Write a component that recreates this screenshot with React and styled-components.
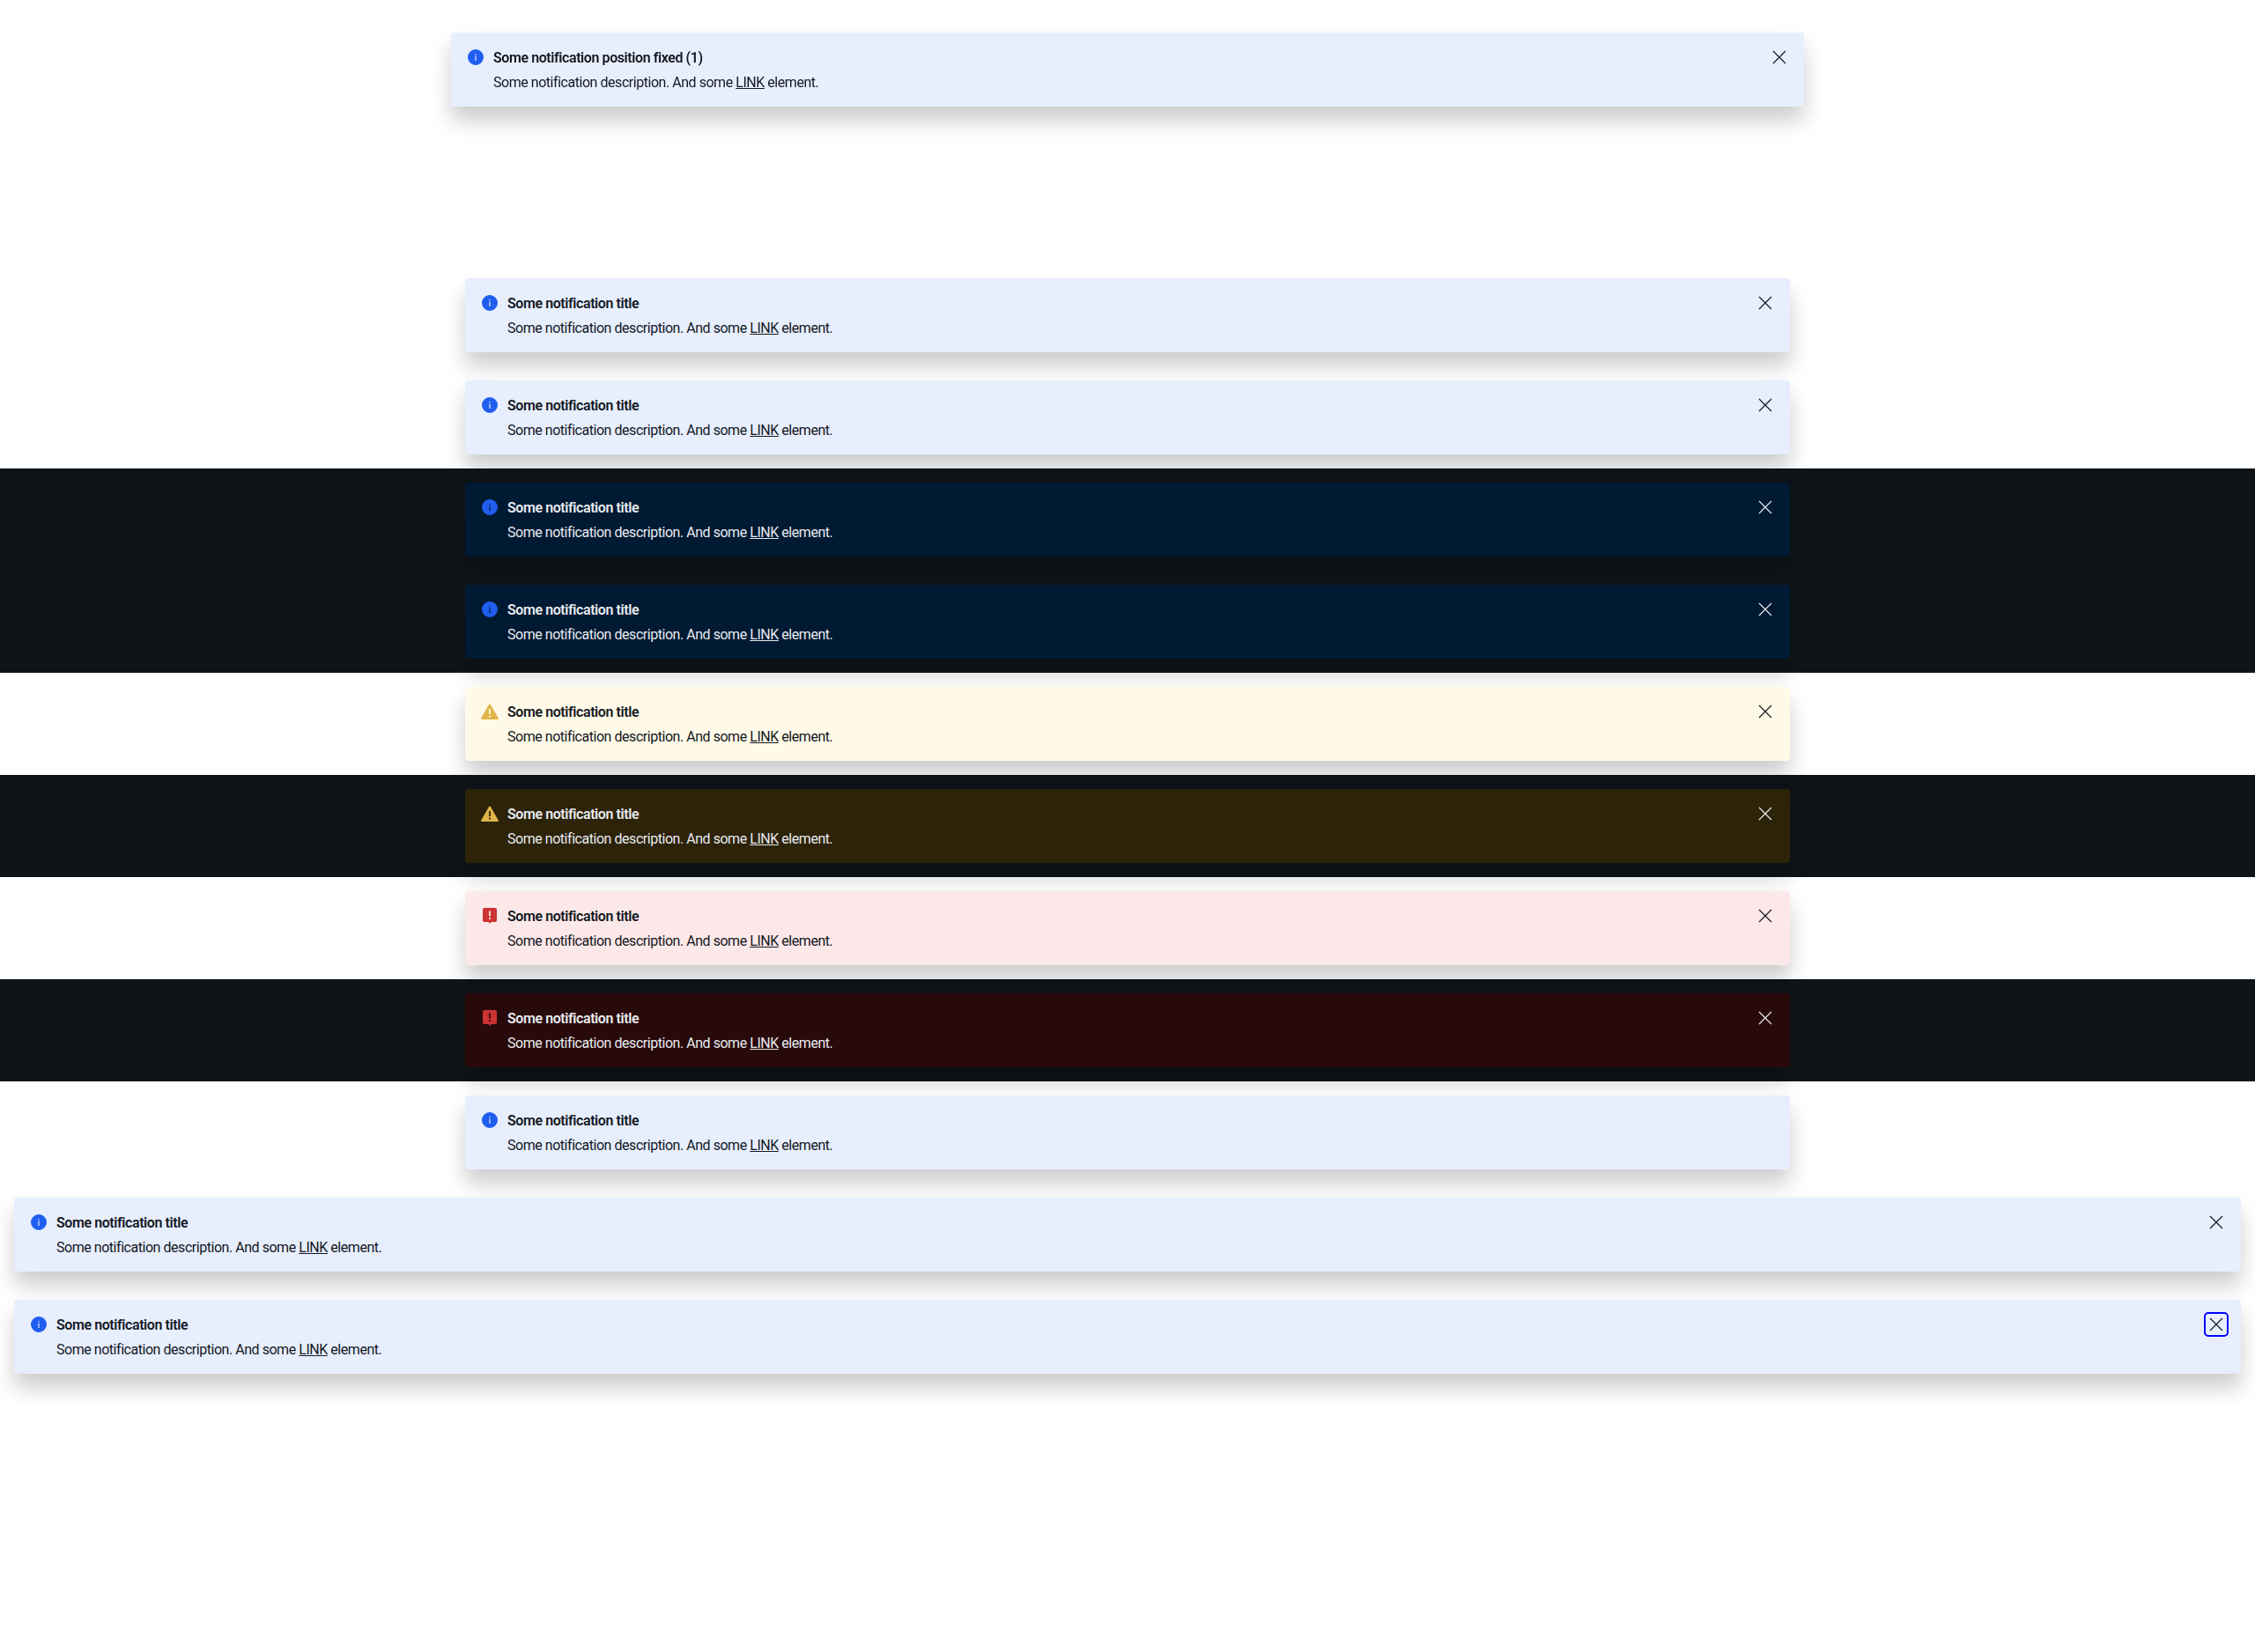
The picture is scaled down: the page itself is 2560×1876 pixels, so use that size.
import styled, { createGlobalStyle, css } from 'styled-components'

const GlobalStyle = createGlobalStyle`
    html, body {
        margin: 0;
        padding: 0;
        background: #fff;
    }

    body {
        min-height: 1876px;
        font-family: Roboto, "Liberation Sans", sans-serif;
        font-size: 16px;
        line-height: 24px;
    }
`

const palette = {
    info: {
        light: { bg: '#e7eefe', icon: '#1f5eef' },
        dark: { bg: '#001a33', icon: '#1f5eef' },
    },
    warning: {
        light: { bg: '#fff9e7', icon: '#dfb44a' },
        dark: { bg: '#2d2309', icon: '#dfb44a' },
    },
    error: {
        light: { bg: '#fde8e9', icon: '#cc3333' },
        dark: { bg: '#290a0a', icon: '#cc3333' },
    },
}

const Page = styled.div`
    padding-top: 300px;
`

const Section = styled.section`
    display: flex;
    flex-direction: column;
    gap: 32px;
    padding: 16px;
    background: ${props => props.$dark ? '#0e1418' : 'transparent'};
`

const Card = styled.div`
    display: flex;
    align-items: flex-start;
    gap: 8px;
    box-sizing: border-box;
    width: 100%;
    max-width: ${props => props.$wide ? 'none' : '1504px'};
    margin: 0 auto;
    padding: 16px 16px 15px;
    border-radius: 4px;
    background: ${props => palette[props.$kind][props.$dark ? 'dark' : 'light'].bg};
    color: ${props => props.$dark ? '#e8eaef' : '#14181f'};
    box-shadow: 0 16px 24px rgba(0, 0, 0, 0.2);

    ${props => props.$fixed && css`
        position: fixed;
        top: 37px;
        left: 512px;
        width: 1536px;
        max-width: none;
        margin: 0;
    `}
`

const IconSlot = styled.div`
    flex: none;
    display: flex;
    align-items: center;
    justify-content: center;
    width: 24px;
    height: 24px;
    color: ${props => palette[props.$kind].light.icon};
`

const Content = styled.div`
    flex: 1;
    display: flex;
    flex-direction: column;
    gap: 4px;
    min-width: 0;
    padding-top: 1px;
`

const Title = styled.div`
    font-weight: 600;
    letter-spacing: -0.42px;
`

const Description = styled.div`
    font-weight: 400;
    letter-spacing: -0.46px;

    a {
        color: inherit;
        text-decoration: underline;
    }
`

const CloseButton = styled.button`
    flex: none;
    display: flex;
    align-items: center;
    justify-content: center;
    width: 24px;
    height: 24px;
    padding: 0;
    border: 0;
    border-radius: 3px;
    background: none;
    color: inherit;
    outline: ${props => props.$focused ? '2px solid #0000ff' : 'none'};
`

const InfoIcon = () => (
    <svg width="18" height="18" viewBox="0 0 18 18" fill="currentColor">
        <path fillRule="evenodd" d="M9 0a9 9 0 1 1 0 18A9 9 0 0 1 9 0zM8.4 5v1.3h1.2V5H8.4zm0 2.6v5.4h1.2V7.6H8.4z" />
    </svg>
)

const WarningIcon = () => (
    <svg width="20" height="18" viewBox="0 0 20 18" fill="currentColor">
        <path fillRule="evenodd" d="M10 0.5c.4 0 .7.2.9.5l8.9 15.6c.3.6-.1 1.4-.9 1.4H1.1c-.8 0-1.2-.8-.9-1.4L9.1 1c.2-.3.5-.5.9-.5zM9.1 6v6h1.8V6H9.1zm0 7.5v2h1.8v-2H9.1z" />
    </svg>
)

const ErrorIcon = () => (
    <svg width="16" height="18" viewBox="0 0 16 18" fill="currentColor">
        <path fillRule="evenodd" d="M2 0h12a2 2 0 0 1 2 2v12a2 2 0 0 1-2 2H9.5L8 18l-1.5-2H2a2 2 0 0 1-2-2V2a2 2 0 0 1 2-2zM7.1 3.5v6h1.8v-6H7.1zm0 7.5v2h1.8v-2H7.1z" />
    </svg>
)

const CloseIcon = () => (
    <svg width="16" height="16" viewBox="0 0 16 16" fill="none" stroke="currentColor" strokeWidth="1.2">
        <path d="M1 1l14 14M15 1L1 15" />
    </svg>
)

const icons = {
    info: InfoIcon,
    warning: WarningIcon,
    error: ErrorIcon,
}

const Notification = ({ kind = 'info', dark, wide, fixed, title = 'Some notification title', closable = true, focused }) => {
    const Icon = icons[kind]

    return (
        <Card $kind={kind} $dark={dark} $wide={wide} $fixed={fixed}>
            <IconSlot $kind={kind}>
                <Icon />
            </IconSlot>
            <Content>
                <Title>{title}</Title>
                <Description>Some notification description. And some <a href="#">LINK</a> element.</Description>
            </Content>
            {closable && (
                <CloseButton $focused={focused} aria-label="Close">
                    <CloseIcon />
                </CloseButton>
            )}
        </Card>
    )
}

export default function App() {
    return (
        <>
            <GlobalStyle />
            <Notification fixed title="Some notification position fixed (1)" />
            <Page>
                <Section>
                    <Notification />
                    <Notification />
                </Section>
                <Section $dark>
                    <Notification dark />
                    <Notification dark />
                </Section>
                <Section>
                    <Notification kind="warning" />
                </Section>
                <Section $dark>
                    <Notification kind="warning" dark />
                </Section>
                <Section>
                    <Notification kind="error" />
                </Section>
                <Section $dark>
                    <Notification kind="error" dark />
                </Section>
                <Section>
                    <Notification closable={false} />
                </Section>
                <Section>
                    <Notification wide />
                </Section>
                <Section>
                    <Notification wide focused />
                </Section>
            </Page>
        </>
    )
}
